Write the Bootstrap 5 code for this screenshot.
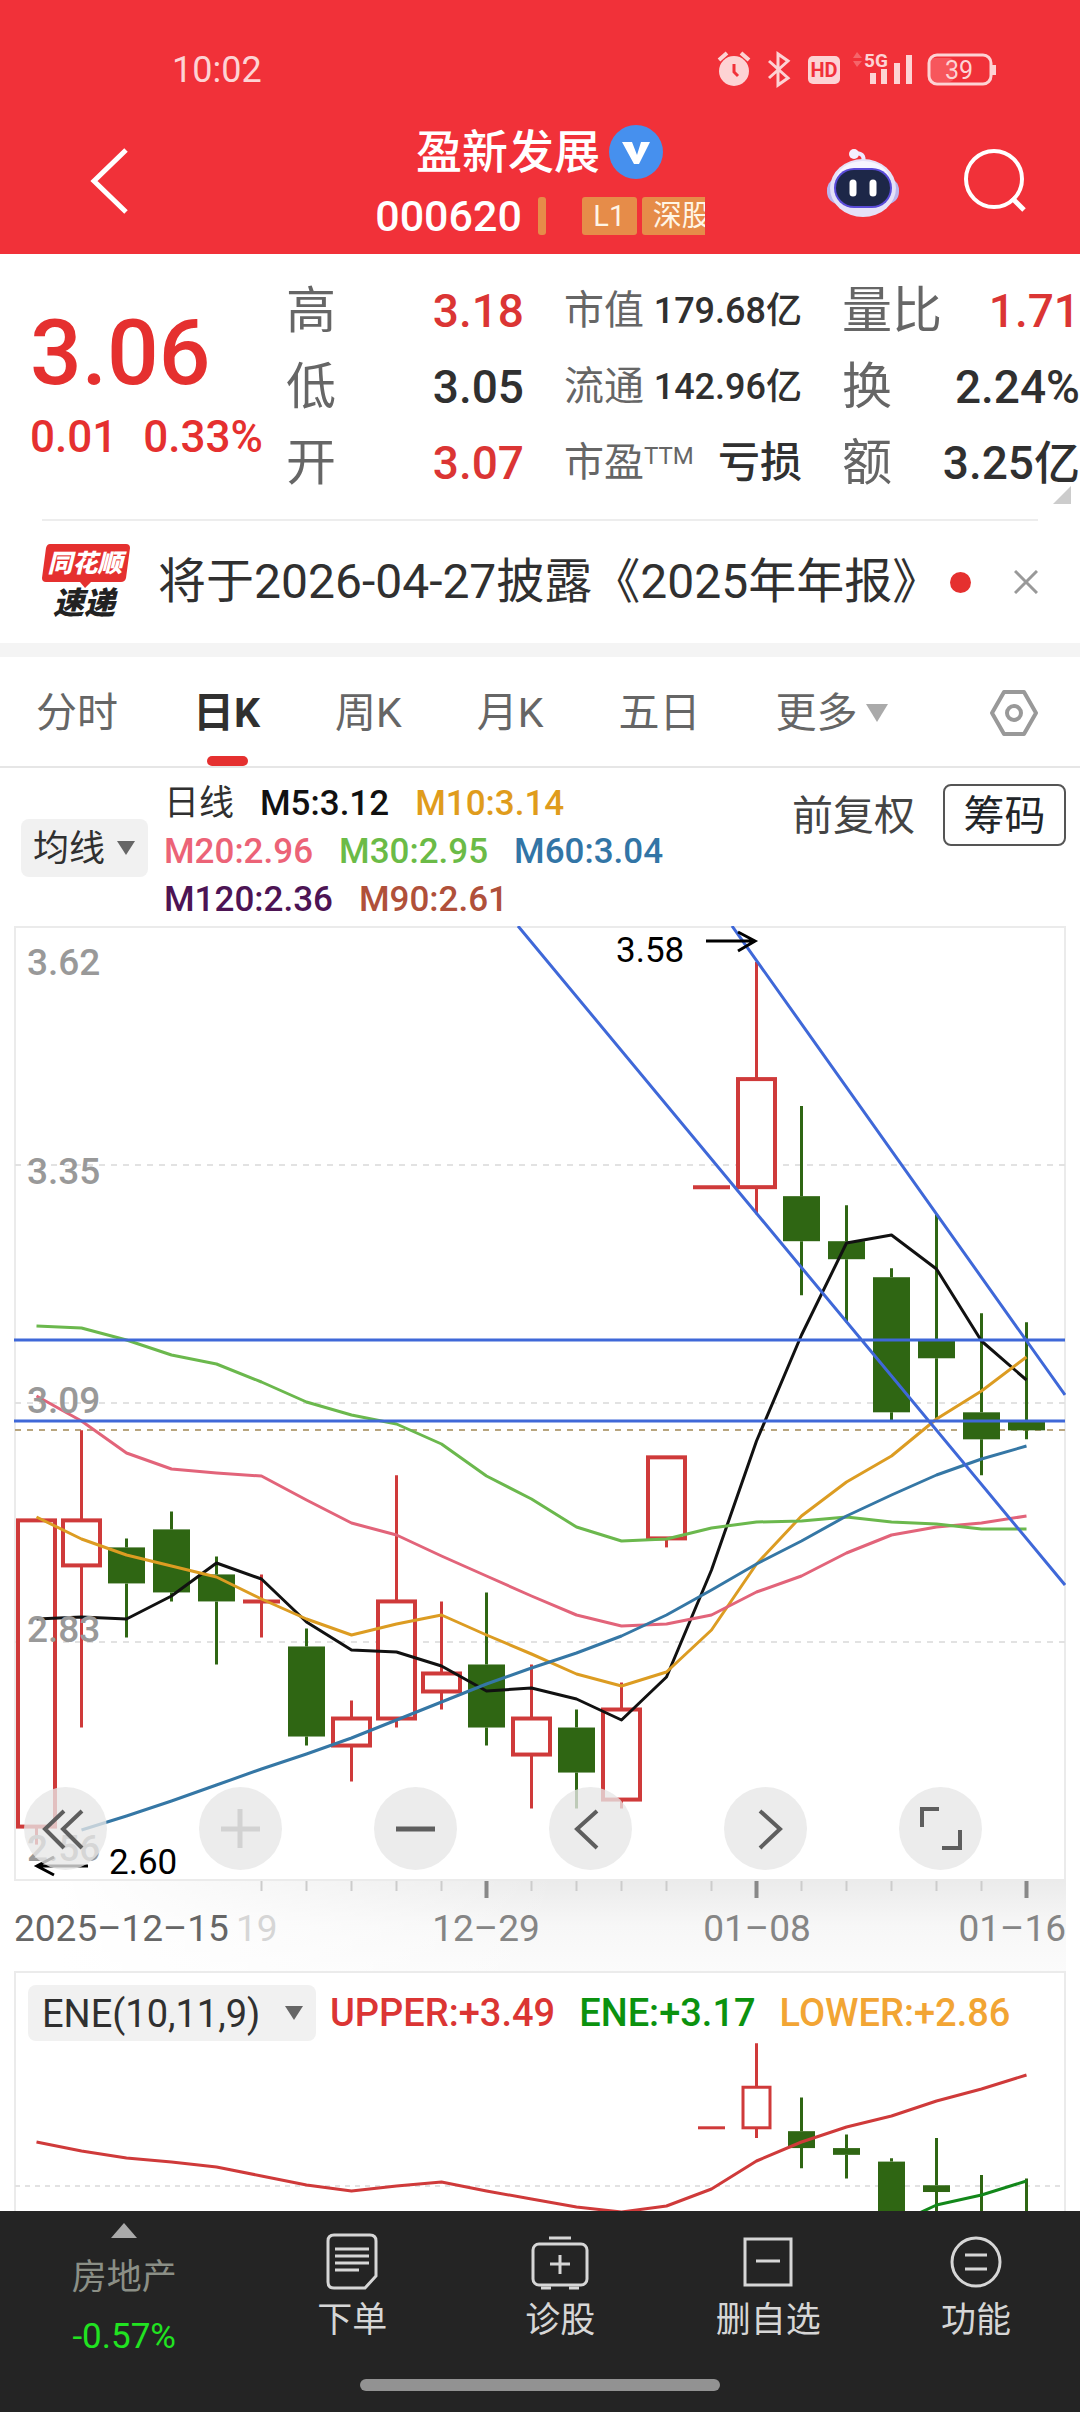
<!DOCTYPE html>
<html lang="zh-CN">
<head>
<meta charset="utf-8">
<meta name="viewport" content="width=device-width, initial-scale=1">
<title>盈新发展 000620</title>
<link href="https://cdn.jsdelivr.net/npm/bootstrap@5.3.0/dist/css/bootstrap.min.css" rel="stylesheet">
<style>
  :root { --up:#e5302f; --ink:#303030; --soft:#666; }
  body { font-family: Roboto, "Noto Sans CJK SC", sans-serif; color: var(--ink); background:#fff; font-size:36px; line-height:48px; overflow-x:hidden; }
  button, select { font-family: inherit; color: inherit; }
  .btn { --bs-btn-padding-x:0; --bs-btn-padding-y:0; --bs-btn-border-width:0; --bs-btn-font-size:41px; --bs-btn-line-height:48px; }
  svg { display:block; }
  .up { color:#db3534; }
  .topbar { background:#f13139; color:#fff; }
  .statusline { height:108px; padding:50px 82px 0 172px; color:#fdd3d4; font-size:36px; }
  .clock { line-height:40px; }
  .titlebar { height:146px; padding:0 54px; }
  .side { flex:1 1 0; }
  .back { margin-left:36px; }
  .stock-name { font-size:46px; line-height:56px; font-weight:500; }
  .stock-code { font-size:43px; line-height:40px; font-weight:500; }
  .flag { background:#e68c49; color:#fff5e6; font-size:29px; line-height:38px; height:38px; border-radius:3px; }
  .flag-bar { width:8px; margin-right:36px; }
  .flag-l1 { width:55px; margin-right:5px; text-align:center; }
  .flag-sz { width:63px; padding-left:11px; overflow:hidden; white-space:nowrap; border-radius:3px 0 0 3px; }
  .quote { padding:19px 0 18px 30px; position:relative; }
  .quote-main { width:256px; padding-top:32px; color:var(--up); white-space:nowrap; }
  .price { font-size:91px; line-height:96px; font-weight:500; }
  .change { font-size:44px; line-height:56px; margin-top:8px; gap:26px; font-weight:500; }
  .facts { gap:40px; }
  .fact { height:76px; }
  .fact-k { font-size:50px; color:var(--soft); white-space:nowrap; }
  .fact-v { font-size:46px; font-weight:500; white-space:nowrap; }
  .fact-mid .fact-k { font-size:40px; }
  .fact-mid .fact-v { font-size:36px; }
  .fact-mid .fact-v.wide-v { font-size:42px; }
  .ttm { font-size:24px; top:-12px; position:relative; vertical-align:baseline; }
  .corner { right:9px; bottom:15px; }
  .news { margin:0 42px; height:124px; border-top:2px solid #ededed; }
  .news-text { font-size:48px; line-height:60px; margin-left:28px; color:var(--ink); white-space:nowrap; text-decoration:none; }
  .dot { width:21px; height:21px; border-radius:50%; background:var(--up); margin-left:auto; margin-right:43px; }
  .band { height:14px; background:#f4f4f4; }
  .periods { height:111px; padding:0 42px 0 36px; gap:75px; border-bottom:2px solid #e6e6e6; }
  .periods .btn { color:var(--soft); height:100%; padding-top:3px; border-radius:0; position:relative; white-space:nowrap; }
  .periods .btn.active { color:var(--ink); font-weight:700; }
  .periods .btn.active::after { content:""; position:absolute; left:50%; bottom:0; width:41px; height:10px; margin-left:-20px; border-radius:5px; background:var(--up); }
  .tri { display:inline-block; border:11px solid transparent; border-top:18px solid #aaa; border-bottom:0; }
  .legend-row { padding:12px 14px 2px 21px; }
  .pick { position:relative; background:#f1f1f1; border-radius:8px; }
  .pick select { appearance:none; border:0; background:transparent; font-size:36px; line-height:48px; padding:2px 12px 0; width:100%; height:100%; }
  .pick::after { content:""; position:absolute; right:13px; top:50%; margin-top:-7px; border:9px solid transparent; border-top:14px solid #666; border-bottom:0; pointer-events:none; }
  .pick-ma { width:127px; height:58px; margin-right:16px; }
  .pick-ene { width:288px; height:56px; }
  .pick-ene select { font-size:38px; padding:2px 14px 0; }
  .ma-list { flex:0 1 520px; column-gap:26px; font-size:35px; line-height:48px; font-weight:500; }
  .ma-list .cn { font-weight:400; }
  .adjust { color:#444; }
  .btn-chip { border:2px solid #555 !important; border-radius:8px; width:123px; height:62px; padding-top:2px; }
  .chart-wrap { margin:0 14px; position:relative; }
  .chart-wrap svg { width:100%; height:auto; }
  .controls { left:10px; right:84px; bottom:101px; }
  .controls .btn { width:83px; height:83px; border-radius:50%; background:rgba(231,231,231,.78); }
  .controls .btn:disabled { opacity:1; }
  .ene-head { position:absolute; left:14px; right:0; top:14px; font-size:38px; line-height:56px; gap:14px; white-space:nowrap; }
  .dock { background:#242424; color:#d6d6d6; height:201px; font-size:35px; position:relative; }
  .dock a { color:inherit; text-decoration:none; padding-top:20px; }
  .dock a span { margin-top:6px; }
  .dock .sector { flex:0 0 23%; color:#8b8f86; padding-top:12px; }
  .dock .sector .pct { color:#21e321; margin-top:11px; }
  .home { position:absolute; left:33.3%; right:33.3%; bottom:21px; height:12px; border-radius:6px; background:#929292; }
</style>
</head>
<body>
<header class="topbar">
  <div class="statusline d-flex justify-content-between align-items-start">
    <span class="clock">10:02</span>
    <svg width="282" height="38" viewBox="716 50 282 38" fill="none" stroke="#fdd3d4">
      <circle cx="734" cy="71" r="15" fill="#fdd3d4" stroke="none"/>
      <path d="M719 60l8-7M749 60l-8-7" stroke-width="4"/>
      <path d="M734 64v8l4 4" stroke="#f13139" stroke-width="3"/>
      <path d="M769 61l19 17-10 7V54l10 7-19 17" stroke-width="3"/>
      <rect x="808" y="56" width="32" height="28" rx="5" fill="#fdd3d4" stroke="none"/>
      <text x="824" y="77" font-size="20" font-weight="700" text-anchor="middle" fill="#f13139" stroke="none">HD</text>
      <path d="M853 58l4-6 5 6zM853 61l4 6 5-6z" fill="#f5656a" stroke="none"/>
      <text x="864" y="67" font-size="19" font-weight="700" fill="#fdd3d4" stroke="none">5G</text>
      <path d="M873 73v11M884 69v15M897 63v21M909 55v29" stroke-width="6"/>
      <rect x="930" y="58" width="24" height="24" rx="5" fill="#f7565c" stroke="none"/>
      <rect x="929" y="55" width="62" height="29" rx="8" stroke-width="3"/>
      <path d="M994 65v10" stroke-width="4"/>
      <text x="959" y="79" font-size="25" text-anchor="middle" fill="#fdd3d4" stroke="none">39</text>
    </svg>
  </div>
  <div class="titlebar d-flex">
    <div class="side pt-4">
      <button class="btn back mt-3" type="button" aria-label="返回"><svg width="40" height="66" viewBox="0 0 40 66" fill="none" stroke="#fff" stroke-width="5"><path d="M36 2L4 33l32 31"/></svg></button>
    </div>
    <div class="d-flex flex-column align-items-center pt-3">
      <div class="d-flex align-items-center gap-2">
        <span class="stock-name">盈新发展</span>
        <svg width="56" height="56" viewBox="0 0 56 56"><circle cx="28" cy="28" r="27" fill="#4690ee"/><path d="M14 18h10l5 13 4-13h9L31 40h-5z" fill="#fff"/></svg>
      </div>
      <div class="d-flex align-items-center mt-3">
        <span class="stock-code me-3">000620</span><span class="flag flag-bar"></span><span class="flag flag-l1">L1</span><span class="flag flag-sz">深股</span>
      </div>
    </div>
    <div class="side d-flex justify-content-end align-items-start pt-4">
      <button class="btn me-5 mt-3" type="button" aria-label="智能助手">
        <svg class="me-3" width="74" height="70" viewBox="0 0 74 70"><path d="M37 15c2-8-2-10-8-10" fill="none" stroke="#eee8ff" stroke-width="4"/><circle cx="28" cy="6" r="5" fill="#f4f0ff"/><rect x="1" y="30" width="72" height="26" rx="12" fill="#b9b5ee"/><ellipse cx="37" cy="40" rx="33" ry="29" fill="#e5e1f8"/><ellipse cx="37" cy="33" rx="27" ry="20" fill="#f7f5ff"/><rect x="8" y="20" width="58" height="40" rx="20" fill="#5a4bd8"/><rect x="10" y="22" width="54" height="36" rx="18" fill="#1d2748"/><path d="M27 35v10M47 35v10" stroke="#fff" stroke-width="7" stroke-linecap="round"/></svg>
      </button>
      <button class="btn mt-3" type="button" aria-label="搜索"><svg width="62" height="64" viewBox="0 0 62 64" fill="none" stroke="#fff" stroke-width="4"><circle cx="30" cy="31" r="28"/><path d="M48 50l12 12" stroke-width="5"/></svg></button>
    </div>
  </div>
</header>

<section class="quote d-flex">
  <div class="quote-main flex-shrink-0">
    <div class="price">3.06</div>
    <div class="change d-flex"><span>0.01</span><span>0.33%</span></div>
  </div>
  <div class="facts d-flex flex-fill">
    <div class="flex-fill w-25">
      <div class="fact d-flex align-items-center justify-content-between"><span class="fact-k">高</span><span class="fact-v up">3.18</span></div>
      <div class="fact d-flex align-items-center justify-content-between"><span class="fact-k">低</span><span class="fact-v">3.05</span></div>
      <div class="fact d-flex align-items-center justify-content-between"><span class="fact-k">开</span><span class="fact-v up">3.07</span></div>
    </div>
    <div class="fact-mid flex-fill w-25">
      <div class="fact d-flex align-items-center justify-content-between"><span class="fact-k">市值</span><span class="fact-v">179.68亿</span></div>
      <div class="fact d-flex align-items-center justify-content-between"><span class="fact-k">流通</span><span class="fact-v">142.96亿</span></div>
      <div class="fact d-flex align-items-center justify-content-between"><span class="fact-k">市盈<sup class="ttm">TTM</sup></span><span class="fact-v wide-v">亏损</span></div>
    </div>
    <div class="flex-fill w-25">
      <div class="fact d-flex align-items-center justify-content-between"><span class="fact-k">量比</span><span class="fact-v up">1.71</span></div>
      <div class="fact d-flex align-items-center justify-content-between"><span class="fact-k">换</span><span class="fact-v">2.24%</span></div>
      <div class="fact d-flex align-items-center justify-content-between"><span class="fact-k">额</span><span class="fact-v">3.25亿</span></div>
    </div>
  </div>
  <svg class="corner position-absolute" width="18" height="18" viewBox="0 0 18 18"><path d="M18 0v18H0z" fill="#ccc"/></svg>
</section>

<section class="news d-flex align-items-center">
  <svg class="flex-shrink-0" width="88" height="92" viewBox="0 -8 88 92">
    <path d="M8 0h76q4 0 4 4l-4 30q-1 4-5 4H49l-6 6-5-6H4q-4 0-4-4L4 4q1-4 4-4z" fill="#e5302f"/>
    <g font-style="italic" font-weight="900"><text x="43" y="28" font-size="25" text-anchor="middle" fill="#fff">同花顺</text><text x="42" y="70" font-size="31" text-anchor="middle" fill="#222">速递</text></g>
  </svg>
  <a class="news-text" href="#">将于2026-04-27披露《2025年年报》</a>
  <span class="dot flex-shrink-0"></span>
  <button class="btn" type="button" aria-label="关闭"><svg width="24" height="24" viewBox="0 0 24 24" stroke="#999" stroke-width="3"><path d="M1 1l22 22M23 1L1 23"/></svg></button>
</section>
<div class="band"></div>

<nav class="periods d-flex align-items-center">
  <button class="btn" type="button">分时</button>
  <button class="btn active" type="button">日K</button>
  <button class="btn" type="button">周K</button>
  <button class="btn" type="button">月K</button>
  <button class="btn" type="button">五日</button>
  <button class="btn d-flex align-items-center gap-2" type="button">更多<i class="tri"></i></button>
  <button class="btn ms-auto d-flex align-items-center" type="button" aria-label="设置"><svg width="48" height="48" viewBox="0 0 48 48" fill="none" stroke="#999" stroke-width="4"><path d="M14 3h20l12 21-12 21H14L2 24z" stroke-linejoin="round"/><circle cx="24" cy="24" r="7"/></svg></button>
</nav>

<section class="legend-row d-flex">
  <div class="pick pick-ma align-self-center flex-shrink-0 mb-2"><select aria-label="主图指标"><option>均线</option></select></div>
  <div class="ma-list d-flex flex-wrap">
    <span class="cn">日线</span><span style="color:#111">M5:3.12</span><span style="color:#e09c1c">M10:3.14</span>
    <span style="color:#ec6377">M20:2.96</span><span style="color:#6bbb47">M30:2.95</span><span style="color:#3275a6">M60:3.04</span>
    <span style="color:#4d1454">M120:2.36</span><span style="color:#b0503a">M90:2.61</span>
  </div>
  <div class="ms-auto d-flex align-items-start">
    <button class="btn adjust me-4 mt-2 pt-1" type="button">前复权</button>
    <button class="btn btn-chip ms-1 mt-1" type="button">筹码</button>
  </div>
</section>

<section class="chart-wrap">
  <svg id="kline" viewBox="14 926 1052 1045" fill="none">
    <defs>
      <linearGradient id="shadeY" x1="0" y1="0" x2="0" y2="1"><stop offset="0" stop-color="#ebebeb"/><stop offset=".5" stop-color="#f7f7f7"/><stop offset="1" stop-color="#fbfbfb"/></linearGradient>
      <linearGradient id="fadeX" x1="0" y1="0" x2="1" y2="0"><stop offset="0" stop-color="#fff"/><stop offset="1" stop-color="#fff" stop-opacity="0"/></linearGradient>
    </defs>
    <rect x="60" y="1881" width="1006" height="90" fill="url(#shadeY)"/>
    <rect x="60" y="1881" width="500" height="90" fill="url(#fadeX)"/>
    <rect x="15" y="927" width="1050" height="953" stroke="#ebebeb" stroke-width="2"/>
    <path d="M15 1165h1050M15 1403h1050M15 1642h1050" stroke="#e2e2e2" stroke-width="2" stroke-dasharray="6 6"/>
    <path d="M15 1430h1050" stroke="#b8a57e" stroke-width="2" stroke-dasharray="6 6"/>
  </svg>
  <div class="controls position-absolute d-flex justify-content-between">
    <button class="btn" type="button" aria-label="最早"><svg viewBox="0 0 83 83" fill="none" stroke="#5e5e5e" stroke-width="4"><path d="M40 24L21 42l19 19M58 24L39 42l19 19"/></svg></button>
    <button class="btn" type="button" aria-label="放大" disabled><svg viewBox="0 0 83 83" stroke="#d2d2d2" stroke-width="5"><path d="M22 42h39M41 22v39"/></svg></button>
    <button class="btn" type="button" aria-label="缩小"><svg viewBox="0 0 83 83" stroke="#5e5e5e" stroke-width="5"><path d="M22 42h39"/></svg></button>
    <button class="btn" type="button" aria-label="左移"><svg viewBox="0 0 83 83" fill="none" stroke="#5e5e5e" stroke-width="4"><path d="M48 24L28 42l20 19"/></svg></button>
    <button class="btn" type="button" aria-label="右移"><svg viewBox="0 0 83 83" fill="none" stroke="#5e5e5e" stroke-width="4"><path d="M36 24l20 18-20 19"/></svg></button>
    <button class="btn" type="button" aria-label="全屏"><svg viewBox="0 0 83 83" fill="none" stroke="#5e5e5e" stroke-width="4"><path d="M40 22H23v18M43 61h18V43"/></svg></button>
  </div>
</section>

<section class="chart-wrap">
  <svg id="ene" viewBox="14 1971 1052 240" fill="none">
    <path d="M15 2211V1972h1050v239" stroke="#ebebeb" stroke-width="2"/>
    <path d="M15 2186h1050" stroke="#e2e2e2" stroke-width="2" stroke-dasharray="5 5"/>
  </svg>
  <div class="ene-head d-flex">
    <div class="pick pick-ene"><select aria-label="副图指标"><option>ENE(10,11,9)</option></select></div>
    <div class="d-flex gap-4 fw-medium"><span class="up">UPPER:+3.49</span><span style="color:#0b920f">ENE:+3.17</span><span style="color:#f2a534">LOWER:+2.86</span></div>
  </div>
</section>

<nav class="dock d-flex">
  <a class="sector d-flex flex-column align-items-center" href="#">
    <svg width="26" height="15" viewBox="0 0 26 15"><path d="M13 0l13 15H0z" fill="#aaa"/></svg>
    <span class="mt-3">房地产</span><span class="pct">-0.57%</span>
  </a>
  <a class="flex-fill w-25 d-flex flex-column align-items-center" href="#">
    <svg width="60" height="60" viewBox="0 0 60 60" fill="none" stroke="#d6d6d6" stroke-width="3"><path d="M12 4h36q6 0 6 6v35L43 57H12q-6 0-6-6V10q0-6 6-6z"/><path d="M13 18h34M13 25h34M13 32h34M13 39h24"/></svg><span>下单</span></a>
  <a class="flex-fill w-25 d-flex flex-column align-items-center" href="#">
    <svg width="60" height="60" viewBox="0 0 60 60" fill="none" stroke="#d6d6d6" stroke-width="3"><rect x="3" y="13" width="54" height="41" rx="6"/><path d="M19 7h22M30 24v19M20 33h20M11 57h10M39 57h10"/></svg><span>诊股</span></a>
  <a class="flex-fill w-25 d-flex flex-column align-items-center" href="#">
    <svg width="60" height="60" viewBox="0 0 60 60" fill="none" stroke="#d6d6d6" stroke-width="3"><rect x="7" y="8" width="46" height="46"/><path d="M18 30h24"/></svg><span>删自选</span></a>
  <a class="flex-fill w-25 d-flex flex-column align-items-center" href="#">
    <svg width="60" height="60" viewBox="0 0 60 60" fill="none" stroke="#d6d6d6" stroke-width="3"><circle cx="30" cy="31" r="24"/><path d="M19 24h22M19 38h22"/></svg><span>功能</span></a>
  <div class="home"></div>
</nav>

<script src="https://cdn.jsdelivr.net/npm/bootstrap@5.3.0/dist/js/bootstrap.bundle.min.js"></script>
<script>
  // open, high, low, close for each trading day
  const days = [
    [2.62,2.96,2.60,2.96],[2.91,3.06,2.73,2.96],[2.93,2.94,2.83,2.89],[2.95,2.97,2.87,2.88],
    [2.90,2.92,2.80,2.87],[2.87,2.90,2.83,2.87],[2.82,2.84,2.71,2.72],[2.71,2.76,2.67,2.74],
    [2.74,3.01,2.73,2.87],[2.77,2.87,2.75,2.79],[2.80,2.88,2.71,2.73],[2.70,2.80,2.64,2.74],
    [2.73,2.75,2.64,2.68],[2.65,2.78,2.64,2.75],[2.94,3.03,2.93,3.03],[3.33,3.33,3.33,3.33],
    [3.33,3.58,3.30,3.45],[3.32,3.42,3.21,3.27],[3.27,3.31,3.18,3.25],[3.23,3.24,3.07,3.08],
    [3.16,3.30,3.07,3.14],[3.08,3.19,3.01,3.05],[3.07,3.18,3.05,3.06]];
  const xAt = i => 36.5 + 45 * i;
  const RED = '#cf3a3a', GREEN = '#2f6613';

  function candles(from, yAt, w, sw, wick) {
    let s = '';
    days.forEach(([o, h, l, c], i) => {
      if (i < from) return;
      const x = xAt(i), top = yAt(Math.max(o, c)), bot = yAt(Math.min(o, c));
      const col = c >= o ? RED : GREEN;
      s += `<path d="M${x} ${yAt(h)}V${top}M${x} ${bot}V${yAt(l)}" stroke="${col}" stroke-width="${wick}"/>`;
      if (o === c) s += `<path d="M${x - w / 2} ${top}h${w}" stroke="${col}" stroke-width="${sw}"/>`;
      else if (c > o) s += `<rect x="${x - w / 2}" y="${top}" width="${w}" height="${bot - top}" fill="#fff" stroke="${col}" stroke-width="${sw}"/>`;
      else s += `<rect x="${x - w / 2}" y="${top}" width="${w}" height="${bot - top}" fill="${col}"/>`;
    });
    return s;
  }
  const line = (ys, col, start = 0, w = 3) =>
    `<polyline points="${ys.map((y, i) => xAt(i + start) + ',' + y).join(' ')}" stroke="${col}" stroke-width="${w}" stroke-linejoin="round"/>`;
  const label = (x, y, t, col, size = 37, extra = '') =>
    `<text x="${x}" y="${y}" font-size="${size}" fill="${col}" ${extra}>${t}</text>`;

  let k = candles(0, p => 1844.6 - (p - 2.60) * 900.6, 37, 4, 3);
  k += line([1619,1617,1619,1596,1563,1579,1622,1650,1652,1666,1691,1688,1699,1720,1677,1570,1441,1335,1243,1235,1269,1341,1380], '#111');
  k += line([1517,1539,1555,1566,1577,1599,1619,1635,1624,1615,1635,1654,1674,1686,1672,1630,1564,1516,1482,1456,1419,1391,1357], '#dc9c22');
  k += line([1396,1421,1453,1469,1473,1476,1500,1523,1535,1556,1576,1596,1615,1626,1624,1615,1592,1576,1553,1535,1527,1523,1516], '#e2647a');
  k += line([1326,1328,1340,1355,1364,1382,1402,1415,1424,1444,1476,1499,1527,1541,1539,1528,1522,1521,1517,1522,1524,1529,1529], '#6bb84d');
  k += line([1830,1816,1801,1785,1769,1754,1738,1720,1702,1684,1668,1653,1636,1615,1590,1564,1541,1516,1495,1475,1459,1446], '#3577a5', 1);
  k += '<path d="M518 926L1065 1585M732 926L1065 1395M14 1340h1051M14 1421h1051" stroke="#3f68d8" stroke-width="3"/>';
  [[975,'3.62'],[1184,'3.35'],[1413,'3.09'],[1642,'2.83'],[1861,'2.56']].forEach(([y, t]) => k += label(27, y, t, '#999', 37, 'font-weight="500"'));
  k += label(616, 962, '3.58', '#000', 35) + label(109, 1874, '2.60', '#000', 35);
  k += '<path d="M706 941h49M738 932l17 9-17 10M88 1866H37M54 1857l-17 9 17 9" stroke="#000" stroke-width="3"/>';
  for (let i = 5; i < days.length; i++) {
    const major = i === 10 || i === 16 || i === 22;
    k += `<path d="M${xAt(i)} 1881v${major ? 17 : 10}" stroke="${major ? '#888' : '#ccc'}" stroke-width="${major ? 4 : 2}"/>`;
  }
  k += label(14, 1941, '2025–12–15', '#666', 37) + label(236, 1941, '19', '#d6d6d6', 37)
     + label(486, 1941, '12–29', '#858585', 37, 'text-anchor="middle"') + label(757, 1941, '01–08', '#858585', 37, 'text-anchor="middle"')
     + label(1066, 1941, '01–16', '#858585', 37, 'text-anchor="end"');
  document.getElementById('kline').insertAdjacentHTML('beforeend', k);

  let e = candles(15, p => 2043.3 + (3.58 - p) * 338, 27, 3, 3);
  e += line([2142,2151,2158,2162,2167,2176,2185,2191,2186,2182,2191,2199,2207,2212,2206,2189,2161,2142,2127,2116,2101,2089,2075], RED);
  e += line([2226,2205,2195,2181], '#12871a', 19);
  document.getElementById('ene').insertAdjacentHTML('beforeend', e);
</script>
</body>
</html>
